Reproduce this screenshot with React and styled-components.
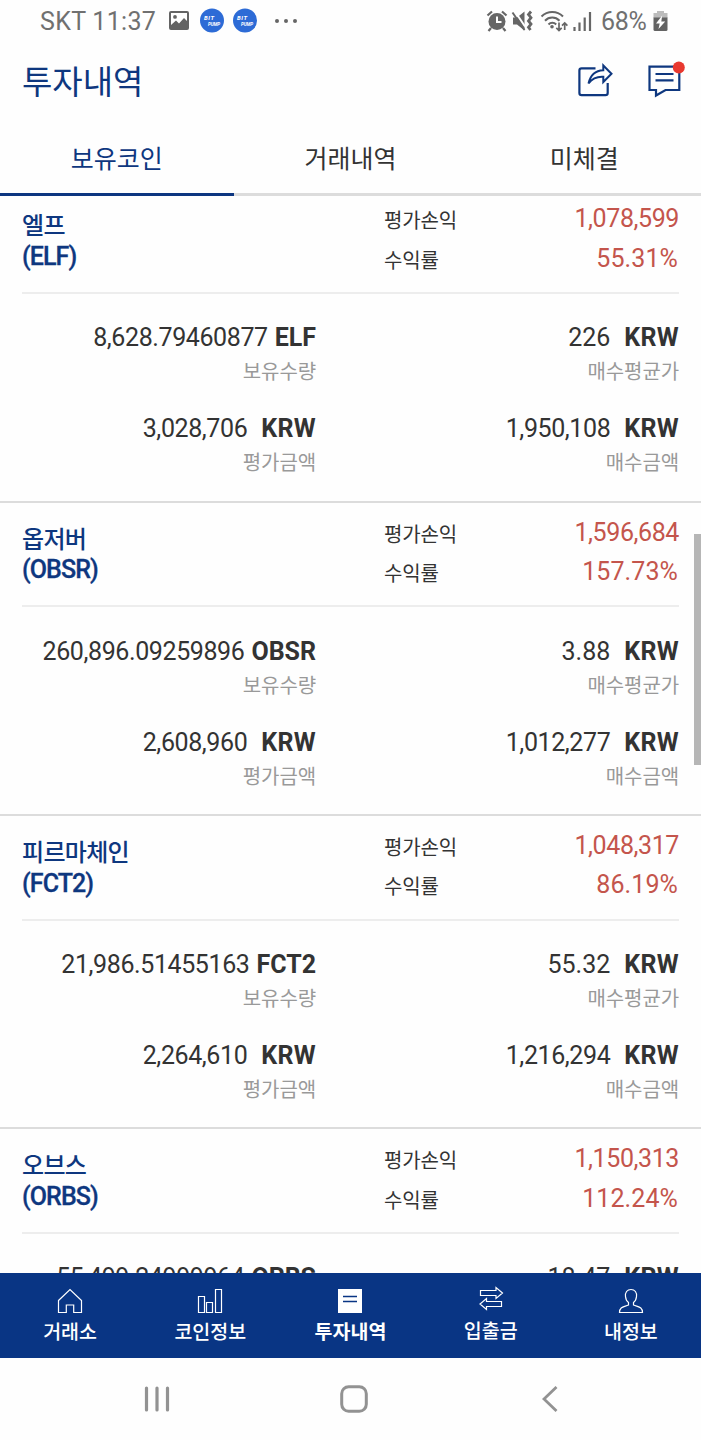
import styled, { createGlobalStyle } from "styled-components";

const coins = [
  {
    name: "엘프",
    symbol: "ELF",
    profit: "1,078,599",
    rate: "55.31%",
    amount: "8,628.79460877",
    avgPrice: "226",
    evalPrice: "3,028,706",
    buyPrice: "1,950,108",
  },
  {
    name: "옵저버",
    symbol: "OBSR",
    profit: "1,596,684",
    rate: "157.73%",
    amount: "260,896.09259896",
    avgPrice: "3.88",
    evalPrice: "2,608,960",
    buyPrice: "1,012,277",
  },
  {
    name: "피르마체인",
    symbol: "FCT2",
    profit: "1,048,317",
    rate: "86.19%",
    amount: "21,986.51455163",
    avgPrice: "55.32",
    evalPrice: "2,264,610",
    buyPrice: "1,216,294",
  },
  {
    name: "오브스",
    symbol: "ORBS",
    profit: "1,150,313",
    rate: "112.24%",
    amount: "55,499.24999964",
    avgPrice: "18.47",
  },
];

const tabs = ["보유코인", "거래내역", "미체결"];

const GlobalStyle = createGlobalStyle`
  * {
    box-sizing: border-box;
  }

  body {
    margin: 0;
    background: #fefefe;
    color: #333;
    font-family: Roboto, "Noto Sans CJK KR", sans-serif;
  }
`;

const Screen = styled.div`
  width: 701px;
  height: 1440px;
  display: flex;
  flex-direction: column;
  overflow: hidden;
  background: #fefefe;
`;

const StatusBar = styled.div`
  height: 42px;
  flex-shrink: 0;
  display: flex;
  align-items: center;
  justify-content: space-between;
  padding: 1px 33px 0 40px;
  color: #707070;
  font-size: 25px;
  line-height: 41px;
`;

const StatusGroup = styled.div`
  display: flex;
  align-items: center;

  svg {
    display: block;
  }
`;

const Notifications = styled(StatusGroup)`
  gap: 9px;
  padding-bottom: 2px;

  svg:first-child {
    margin-right: 2px;
  }

  svg:last-child {
    margin-left: 8px;
  }
`;

const Clock = styled.span`
  width: 129px;
  letter-spacing: 0.3px;
  white-space: nowrap;
`;

const Battery = styled.span`
  width: 52px;
  letter-spacing: -0.3px;
`;

const Header = styled.header`
  height: 82px;
  flex-shrink: 0;
  display: flex;
  align-items: flex-start;
  justify-content: space-between;
  padding: 15px 16px 0 22px;
`;

const Title = styled.h1`
  margin: 0;
  padding-top: 1px;
  color: #0e377f;
  font-size: 33px;
  font-weight: 400;
  line-height: 49px;
`;

const Tabs = styled.nav`
  height: 72px;
  flex-shrink: 0;
  display: grid;
  grid-template-columns: repeat(3, 1fr);
`;

const Tab = styled.button`
  border: 0;
  border-bottom: 3px solid ${(p) => (p.$active ? "#0c3680" : "#dcdcdc")};
  padding: 3px 0 0;
  background: none;
  color: ${(p) => (p.$active ? "#0e377f" : "#333")};
  font-family: inherit;
  font-size: 25px;
  line-height: 66px;
`;

const ListArea = styled.main`
  height: 1077px;
  flex-shrink: 0;
  position: relative;
  overflow: hidden;
`;

/* list is scrolled a few pixels under the tabs */
const List = styled.div`
  margin-top: -6.6px;
`;

const ScrollThumb = styled.div`
  position: absolute;
  top: 338px;
  right: 0;
  width: 7.5px;
  height: 231px;
  background: #b6b6b6;
`;

const Card = styled.section`
  height: 313.3px;
  padding: 0 22px;
  border-bottom: 2px solid #dcdcdc;
`;

const Summary = styled.div`
  height: 104.5px;
  display: grid;
  grid-template-columns: 362px 1fr;
  border-bottom: 2px solid #ededed;
`;

const CoinName = styled.div`
  padding-top: 22px;
  color: #0e377f;
  font-size: 24px;
  font-weight: 500;
  line-height: 30.5px;
  letter-spacing: -0.7px;
`;

const Symbol = styled.div`
  font-size: 25px;
  letter-spacing: -0.9px;
  -webkit-text-stroke: 0.3px #0e377f;
`;

const Profit = styled.dl`
  margin: 0;
  padding-top: 10px;
  display: grid;
  grid-template-columns: auto auto;
  justify-content: space-between;
  grid-auto-rows: 39.4px;
  line-height: 39.4px;

  dt {
    padding-top: 3px;
    font-size: 20px;
    letter-spacing: -0.15px;
  }
`;

const ProfitValue = styled.dd`
  margin: 0;
  padding-right: ${(p) => (p.$rate ? "1px" : "0")};
  color: #c4554c;
  font-size: 25px;
  text-align: right;
  letter-spacing: ${(p) => (p.$rate ? "0.1px" : "-0.4px")};
`;

const Details = styled.div`
  display: grid;
  grid-template-columns: 294px 363px;
  row-gap: 23px;
  padding-top: 27.5px;
`;

const Value = styled.div`
  text-align: right;
  font-size: 25px;
  line-height: 34px;
  letter-spacing: ${(p) => (p.$loose ? "0" : "-0.4px")};
  white-space: nowrap;

  strong {
    margin-left: ${(p) => (p.$tight ? "7px" : "14px")};
    font-weight: 700;
    letter-spacing: ${(p) => (p.$tight ? "0" : "0.3px")};
  }
`;

const Caption = styled.div`
  color: #999;
  font-size: 20px;
  line-height: 34px;
  letter-spacing: -0.1px;
  text-align: right;
`;

const BottomNav = styled.nav`
  height: 85px;
  flex-shrink: 0;
  display: grid;
  grid-template-columns: repeat(5, 1fr);
  background: #093584;
  color: #fff;
`;

const NavItem = styled.a`
  display: flex;
  flex-direction: column;
  align-items: center;
  padding-top: ${(p) => (p.$raised ? "12px" : "14px")};
  font-size: 19.5px;
  font-weight: ${(p) => (p.$active ? 700 : 500)};
  line-height: ${(p) => (p.$raised ? "38px" : "36px")};

  svg {
    display: block;
    width: 28px;
    height: 28px;
    flex-shrink: 0;
  }
`;

const SystemNav = styled.div`
  flex: 1;
  display: grid;
  grid-template-columns: 117px 80px 116px 81px 116px 80px;
  justify-items: center;
  align-items: center;
`;

const SystemKey = styled.button`
  grid-column: ${(p) => p.$column};
  display: flex;
  border: 0;
  padding: 0;
  background: none;
`;

function PictureIcon() {
  return (
    <svg width="20" height="19" viewBox="0 0 20 19">
      <path
        fill="#636363"
        fillRule="evenodd"
        d="M2 0h16q2 0 2 2v15q0 2-2 2H2q-2 0-2-2V2Q0 0 2 0Zm0 2v12l5-4.500 3 3 5-5.500 3 3V2ZM6 4a1.900 1.900 0 1 1 0 3.800A1.900 1.900 0 0 1 6 4Z"
      />
    </svg>
  );
}

function BitIcon() {
  return (
    <svg width="24" height="25" viewBox="0 0 24 25">
      <circle cx="12" cy="12.5" r="12" fill="#2d6bd6" />
      <g
        fill="#fff"
        fontFamily="Roboto, sans-serif"
        fontWeight="700"
        fontStyle="italic"
      >
        <text x="4" y="12" fontSize="6" textLength="10">
          BIT
        </text>
        <text x="8" y="17.500" fontSize="4.500" textLength="12">
          PUMP
        </text>
      </g>
    </svg>
  );
}

function DotsIcon() {
  return (
    <svg width="24" height="6" viewBox="0 0 24 6" fill="#666">
      <circle cx="3" cy="3" r="2" />
      <circle cx="12" cy="3" r="2" />
      <circle cx="21" cy="3" r="2" />
    </svg>
  );
}

function SystemIcons() {
  return (
    <svg width="115" height="32" viewBox="0 0 115 32" fill="none">
      {/* alarm */}
      <circle cx="11" cy="15.500" r="8.500" fill="#666" />
      <path d="M11 10.500v5.500h4.500" stroke="#fefefe" strokeWidth="2" />
      <path
        d="M1.500 9.500l4.500-4M20.500 9.500l-4.500-4M5 22l-2.500 3M17 22l2.500 3"
        stroke="#666"
        strokeWidth="2.200"
      />
      {/* vibrate */}
      <path d="M27 11.500h4l7.500-6V24.500l-7.500-6h-4z" fill="#666" />
      <path d="M29 5.500l10 15" stroke="#fefefe" strokeWidth="2" />
      <path d="M26.500 6.500l12 17.500" stroke="#666" strokeWidth="2" />
      <path
        d="M45 5.500l-2.500 3 2.500 3.200-2.500 3.200 2.500 3.200-2.500 3.200 2 2.700"
        stroke="#666"
        strokeWidth="2.800"
      />
      {/* wifi */}
      <path
        d="M55.500 10.500c6-6 15.500-6 21.500 0M59 14.700c4-4.200 10.500-4.200 14.500 0M62.500 18.500c2.200-2.400 5.500-2.400 7.700 0"
        stroke="#666"
        strokeWidth="2"
      />
      <circle cx="66" cy="20.800" r="1.800" fill="#666" />
      <path
        d="M73 16.500v8m-2.700-2.700l2.700 2.700 2.700-2.700M78.700 24v-7m-2.700 2.700l2.700-2.700 2.700 2.700"
        stroke="#666"
        strokeWidth="1.700"
      />
      {/* signal */}
      <path
        d="M88.500 25v-4M93.500 25v-8.500M98.700 25v-13.500M104 25v-19"
        stroke="#666"
        strokeWidth="2.200"
      />
    </svg>
  );
}

function BatteryIcon() {
  return (
    <svg width="15" height="22" viewBox="0 0 15 22">
      <path fill="#bcbcbc" d="M4 0h7v2h3.500v5H.5V2H4z" />
      <path fill="#636363" d="M.5 6.500h14V18.500q0 1.500-1.500 1.500H2Q.5 20 .5 18.500z" />
      <path fill="#fff" d="M9.200 4.500L3 12.500h3.700L5.500 18l6.700-7.500H8.300z" />
    </svg>
  );
}

function HeaderIcons() {
  return (
    <svg width="112" height="46" viewBox="0 0 112 46" fill="none">
      <g stroke="#0e377f" strokeWidth="2.200">
        <path d="M22.500 11.300H8.600q-2.200 0-2.200 2.200V36q0 2.200 2.200 2.200H32.500q2.200 0 2.200-2.200V26" />
        <path
          strokeWidth="2"
          d="M15.500 26.500c2-9 7-13 14.800-13.300V8.500l8.200 8.200-8.200 8.300v-5.200c-6.500-.4-11.300 2-14.800 6.700z"
        />
        <path d="M76.500 9.700h29.800v23.300H92.500L83 38.500V33h-6.500z" />
        <path d="M82.500 17h18M82.500 23.300h18" />
      </g>
      <circle cx="105.800" cy="10.500" r="6" fill="#e8382f" />
    </svg>
  );
}

const navIcons = {
  home: <path d="M2.500 13.500L14 2.500l11.500 11v12h-7.800v-7.500h-7.400v7.500H2.500z" />,
  chart: (
    <path d="M2.500 9.500h6v16h-6zM10.500 15.500h6v10h-6zM19.500 2.500h6v23h-6z" />
  ),
  invest: (
    <>
      <path d="M2 2h24v24H2z" fill="#fff" stroke="none" />
      <path d="M7 9.500h14M7 14.500h14" stroke="#093584" strokeWidth="1.500" />
    </>
  ),
  transfer: (
    <path d="M3.500 5.500h15.500V2.500l6.500 5.500-6.500 5.500V10.500H3.500zM24.500 16.500H9.500v-3L3 19l6.500 5.500v-3h15z" />
  ),
  user: (
    <path d="M14 2.500c-4 0-6 3-5.500 7 .3 3 1.500 5 3 6v2.500C7 20 2.500 19.500 2.500 25.500h23c0-6-4.500-5.500-9-7.500V15.500c1.500-1 2.700-3 3-6 .5-4-1.500-7-5.500-7z" />
  ),
};

const navItems = [
  { label: "거래소", icon: "home" },
  { label: "코인정보", icon: "chart" },
  { label: "투자내역", icon: "invest", active: true },
  { label: "입출금", icon: "transfer", raised: true },
  { label: "내정보", icon: "user" },
];

function CoinCard({ coin }) {
  return (
    <Card>
      <Summary>
        <CoinName>
          <div>{coin.name}</div>
          <Symbol>({coin.symbol})</Symbol>
        </CoinName>
        <Profit>
          <dt>평가손익</dt>
          <ProfitValue>{coin.profit}</ProfitValue>
          <dt>수익률</dt>
          <ProfitValue $rate>{coin.rate}</ProfitValue>
        </Profit>
      </Summary>
      <Details>
        <div>
          <Value $tight>
            {coin.amount}
            <strong>{coin.symbol}</strong>
          </Value>
          {coin.evalPrice && <Caption>보유수량</Caption>}
        </div>
        <div>
          <Value $loose>
            {coin.avgPrice}
            <strong>KRW</strong>
          </Value>
          {coin.buyPrice && <Caption>매수평균가</Caption>}
        </div>
        {coin.evalPrice && (
          <div>
            <Value>
              {coin.evalPrice}
              <strong>KRW</strong>
            </Value>
            <Caption>평가금액</Caption>
          </div>
        )}
        {coin.buyPrice && (
          <div>
            <Value>
              {coin.buyPrice}
              <strong>KRW</strong>
            </Value>
            <Caption>매수금액</Caption>
          </div>
        )}
      </Details>
    </Card>
  );
}

export default function App() {
  return (
    <Screen>
      <GlobalStyle />
      <StatusBar>
        <StatusGroup>
          <Clock>SKT 11:37</Clock>
          <Notifications>
            <PictureIcon />
            <BitIcon />
            <BitIcon />
            <DotsIcon />
          </Notifications>
        </StatusGroup>
        <StatusGroup>
          <SystemIcons />
          <Battery>68%</Battery>
          <BatteryIcon />
        </StatusGroup>
      </StatusBar>
      <Header>
        <Title>투자내역</Title>
        <HeaderIcons />
      </Header>
      <Tabs>
        {tabs.map((tab, i) => (
          <Tab key={tab} $active={i === 0}>
            {tab}
          </Tab>
        ))}
      </Tabs>
      <ListArea>
        <List>
          {coins.map((coin) => (
            <CoinCard key={coin.symbol} coin={coin} />
          ))}
        </List>
        <ScrollThumb />
      </ListArea>
      <BottomNav>
        {navItems.map((item) => (
          <NavItem key={item.label} $active={item.active} $raised={item.raised}>
            <svg viewBox="0 0 28 28" fill="none" stroke="#fff" strokeWidth="1.200">
              {navIcons[item.icon]}
            </svg>
            {item.label}
          </NavItem>
        ))}
      </BottomNav>
      <SystemNav>
        <SystemKey $column={2}>
          <svg width="26" height="28" viewBox="0 0 26 28">
            <path
              d="M2.500 3v22M13 3v22M23.500 3v22"
              stroke="#929292"
              strokeWidth="3.200"
              strokeLinecap="round"
            />
          </svg>
        </SystemKey>
        <SystemKey $column={4}>
          <svg width="28" height="28" viewBox="0 0 28 28" fill="none">
            <rect
              x="1.700"
              y="1.700"
              width="24.600"
              height="24.600"
              rx="7"
              stroke="#929292"
              strokeWidth="3"
            />
          </svg>
        </SystemKey>
        <SystemKey $column={6}>
          <svg width="16" height="26" viewBox="0 0 16 26" fill="none">
            <path d="M14.500 1L2 13l12.500 12" stroke="#929292" strokeWidth="2.800" />
          </svg>
        </SystemKey>
      </SystemNav>
    </Screen>
  );
}
